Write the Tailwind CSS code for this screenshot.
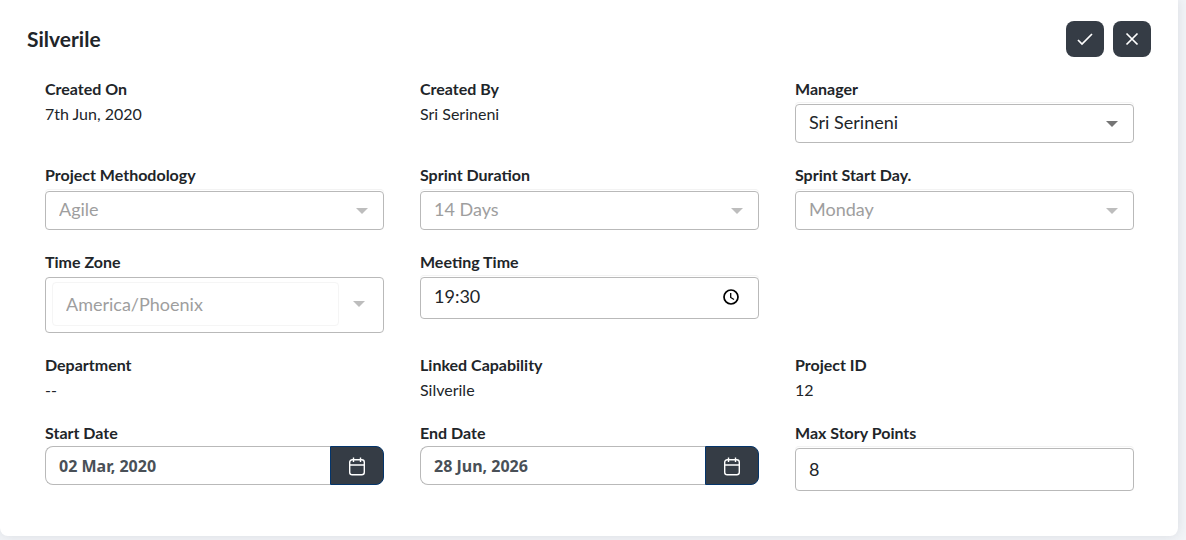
<!DOCTYPE html>
<html lang="en">
<head>
    <meta charset="UTF-8">
    <meta name="viewport" content="width=device-width, initial-scale=1.0">
    <title>Silverile - Project Details</title>
    <script src="https://cdn.jsdelivr.net/npm/@tailwindcss/browser@4"></script>
    <style>
        body {
            font-family: 'Lato', sans-serif;
        }
    </style>
</head>
<body class="bg-[#f2f4f7] text-[#212529] text-base pr-2 pb-1">
    <main class="bg-white rounded-b-lg shadow-[0_0_12px_rgba(50,60,80,0.12)] pt-[21px] pb-[45px]">
        <!-- Header -->
        <header class="flex items-center justify-between px-[27px]">
            <h1 class="text-[21px] leading-7 font-bold">Silverile</h1>
            <div class="flex gap-[9px]">
                <button type="button" aria-label="Save" class="flex items-center justify-center w-[38px] h-9 rounded-lg bg-[#353c45] text-white">
                    <svg class="size-5" viewBox="0 0 20 20" fill="none" stroke="currentColor" stroke-width="1.7"><path d="M3 11l4 4L17 5"/></svg>
                </button>
                <button type="button" aria-label="Cancel" class="flex items-center justify-center w-[38px] h-9 rounded-lg bg-[#353c45] text-white">
                    <svg class="size-5" viewBox="0 0 20 20" fill="none" stroke="currentColor" stroke-width="1.7"><path d="M4.500 4.500l11 11M15.500 4.500l-11 11"/></svg>
                </button>
            </div>
        </header>

        <!-- Project Fields -->
        <form class="grid grid-cols-3 gap-x-9 gap-y-5 items-start pl-[45px] pr-11 mt-5">
            <div>
                <h2 class="font-bold leading-6">Created On</h2>
                <p class="leading-[26px] -mb-0.5">7th Jun, 2020</p>
            </div>
            <div>
                <h2 class="font-bold leading-6">Created By</h2>
                <p class="leading-[26px] -mb-0.5">Sri Serineni</p>
            </div>
            <div>
                <label for="manager" class="block font-bold leading-6 mb-[3px]">Manager</label>
                <div class="grid items-center">
                    <select id="manager" class="col-start-1 row-start-1 appearance-none w-full h-[39px] pl-[13px] pr-9 pb-1 border border-[#b9b9b9] rounded bg-white text-lg shadow-[0_-1px_0_#fff,0_-2px_0_#f3f3f3]">
                        <option>Sri Serineni</option>
                    </select>
                    <svg class="col-start-1 row-start-1 justify-self-end mr-4 w-3 h-1.5 text-[#757575] pointer-events-none" viewBox="0 0 12 6" fill="currentColor"><path d="M0 0h12L6 6z"/></svg>
                </div>
            </div>

            <div>
                <label for="methodology" class="block font-bold leading-6 mb-1">Project Methodology</label>
                <div class="grid items-center">
                    <select id="methodology" disabled class="col-start-1 row-start-1 appearance-none w-full h-[39px] pl-[13px] pr-9 pb-1 border border-[#b9b9b9] rounded bg-white text-lg text-[#9e9e9e] opacity-100 shadow-[0_-1px_0_#fff,0_-2px_0_#f3f3f3]">
                        <option>Agile</option>
                    </select>
                    <svg class="col-start-1 row-start-1 justify-self-end mr-4 w-3 h-1.5 text-[#bdbdbd] pointer-events-none" viewBox="0 0 12 6" fill="currentColor"><path d="M0 0h12L6 6z"/></svg>
                </div>
            </div>
            <div>
                <label for="duration" class="block font-bold leading-6 mb-1">Sprint Duration</label>
                <div class="grid items-center">
                    <select id="duration" disabled class="col-start-1 row-start-1 appearance-none w-full h-[39px] pl-[13px] pr-9 pb-1 border border-[#b9b9b9] rounded bg-white text-lg text-[#9e9e9e] opacity-100 shadow-[0_-1px_0_#fff,0_-2px_0_#f3f3f3]">
                        <option>14 Days</option>
                    </select>
                    <svg class="col-start-1 row-start-1 justify-self-end mr-4 w-3 h-1.5 text-[#bdbdbd] pointer-events-none" viewBox="0 0 12 6" fill="currentColor"><path d="M0 0h12L6 6z"/></svg>
                </div>
            </div>
            <div>
                <label for="start-day" class="block font-bold leading-6 mb-1">Sprint Start Day.</label>
                <div class="grid items-center">
                    <select id="start-day" disabled class="col-start-1 row-start-1 appearance-none w-full h-[39px] pl-[13px] pr-9 pb-1 border border-[#b9b9b9] rounded bg-white text-lg text-[#9e9e9e] opacity-100 shadow-[0_-1px_0_#fff,0_-2px_0_#f3f3f3]">
                        <option>Monday</option>
                    </select>
                    <svg class="col-start-1 row-start-1 justify-self-end mr-4 w-3 h-1.5 text-[#bdbdbd] pointer-events-none" viewBox="0 0 12 6" fill="currentColor"><path d="M0 0h12L6 6z"/></svg>
                </div>
            </div>

            <div>
                <label for="timezone" class="block font-bold leading-6 mb-[3px]">Time Zone</label>
                <div class="flex items-center h-14 pl-1.5 pr-[18px] pb-0.5 border border-[#b9b9b9] rounded">
                    <select id="timezone" disabled class="appearance-none grow h-11 px-[13px] border border-[#f5f5f5] rounded bg-white text-lg text-[#9e9e9e] opacity-100">
                        <option>America/Phoenix</option>
                    </select>
                    <svg class="ml-3.5 w-3 h-1.5 text-[#bdbdbd]" viewBox="0 0 12 6" fill="currentColor"><path d="M0 0h12L6 6z"/></svg>
                </div>
            </div>
            <div class="col-span-2 grid grid-cols-2 gap-x-9">
                <div>
                    <label for="meeting-time" class="block font-bold leading-6 mb-[3px]">Meeting Time</label>
                    <div class="flex items-center h-[42px] pl-[13px] pr-[18px] pb-0.5 border border-[#b9b9b9] rounded shadow-[0_-1px_0_#fff,0_-2px_0_#f3f3f3]">
                        <input id="meeting-time" type="text" value="19:30" class="grow min-w-0 text-lg pb-0.5 outline-none">
                        <button type="button" aria-label="Pick a time">
                            <svg class="size-[18px] text-black" viewBox="0 0 18 18" fill="none" stroke="currentColor"><circle cx="9" cy="9" r="7" stroke-width="1.7"/><path d="M8.700 5v4.500l3.300 2" stroke-width="1.300"/></svg>
                        </button>
                    </div>
                </div>
            </div>

            <div>
                <h2 class="font-bold leading-6">Department</h2>
                <p class="leading-[26px] -mb-0.5">--</p>
            </div>
            <div>
                <h2 class="font-bold leading-6">Linked Capability</h2>
                <p class="leading-[26px] -mb-0.5">Silverile</p>
            </div>
            <div>
                <h2 class="font-bold leading-6">Project ID</h2>
                <p class="leading-[26px] -mb-0.5">12</p>
            </div>

            <div>
                <label for="start-date" class="block font-bold leading-6 mb-px">Start Date</label>
                <div class="flex h-[39px]">
                    <input id="start-date" type="text" value="02 Mar, 2020" class="grow min-w-0 pl-[13px] border border-r-0 border-[#b9b9b9] rounded-l-lg font-['Noto_Sans'] text-base font-bold text-[#495057]">
                    <button type="button" aria-label="Pick start date" class="flex items-center justify-center w-[54px] shrink-0 border border-[#04356b] rounded-r-lg bg-[#353c45] text-white">
                        <svg class="size-5" viewBox="0 0 20 20" fill="none" stroke="currentColor" stroke-width="1.4"><rect x="2.700" y="3.700" width="14.600" height="15" rx="2.500"/><path d="M3 9h14M6.500 1.500v4.500M13.500 1.500v4.500"/></svg>
                    </button>
                </div>
            </div>
            <div>
                <label for="end-date" class="block font-bold leading-6 mb-px">End Date</label>
                <div class="flex h-[39px]">
                    <input id="end-date" type="text" value="28 Jun, 2026" class="grow min-w-0 pl-[13px] border border-r-0 border-[#b9b9b9] rounded-l-lg font-['Noto_Sans'] text-base font-bold text-[#495057]">
                    <button type="button" aria-label="Pick end date" class="flex items-center justify-center w-[54px] shrink-0 border border-[#04356b] rounded-r-lg bg-[#353c45] text-white">
                        <svg class="size-5" viewBox="0 0 20 20" fill="none" stroke="currentColor" stroke-width="1.4"><rect x="2.700" y="3.700" width="14.600" height="15" rx="2.500"/><path d="M3 9h14M6.500 1.500v4.500M13.500 1.500v4.500"/></svg>
                    </button>
                </div>
            </div>
            <div>
                <label for="story-points" class="block font-bold leading-6 mb-[3px]">Max Story Points</label>
                <input id="story-points" type="text" value="8" class="block w-full h-[43px] px-[13px] pb-0.5 border border-[#b9b9b9] rounded text-lg shadow-[0_-1px_0_#fff,0_-2px_0_#f3f3f3]">
            </div>
        </form>
    </main>
</body>
</html>
